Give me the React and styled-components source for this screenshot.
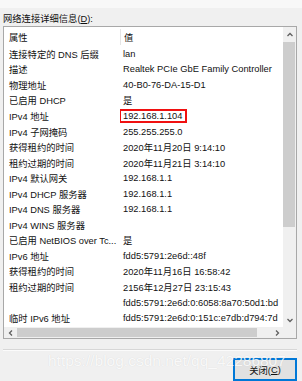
import React from 'react'
import styled, { createGlobalStyle } from 'styled-components'

const GlobalStyle = createGlobalStyle`
	html, body {
		margin: 0;
		padding: 0;
		background: #f0f0f0;
	}
	body {
		width: 302px;
		height: 381px;
		overflow: hidden;
	}
`

const rows = [
	{ name: '连接特定的 DNS 后缀', value: 'lan' },
	{ name: '描述', value: 'Realtek PCIe GbE Family Controller' },
	{ name: '物理地址', value: '40-B0-76-DA-15-D1' },
	{ name: '已启用 DHCP', value: '是' },
	{ name: 'IPv4 地址', value: '192.168.1.104', marked: true },
	{ name: 'IPv4 子网掩码', value: '255.255.255.0' },
	{ name: '获得租约的时间', value: '2020年11月20日 9:14:10' },
	{ name: '租约过期的时间', value: '2020年11月21日 3:14:10' },
	{ name: 'IPv4 默认网关', value: '192.168.1.1' },
	{ name: 'IPv4 DHCP 服务器', value: '192.168.1.1' },
	{ name: 'IPv4 DNS 服务器', value: '192.168.1.1' },
	{ name: 'IPv4 WINS 服务器', value: '' },
	{ name: '已启用 NetBIOS over Tc...', value: '是' },
	{ name: 'IPv6 地址', value: 'fdd5:5791:2e6d::48f' },
	{ name: '获得租约的时间', value: '2020年11月16日 16:58:42' },
	{ name: '租约过期的时间', value: '2156年12月27日 23:15:43' },
	{ name: '', value: 'fdd5:5791:2e6d:0:6058:8a70:50d1:bd' },
	{ name: '临时 IPv6 地址', value: 'fdd5:5791:2e6d:0:151c:e7db:d794:7d' },
]

const Chevron = ({ dir }) => {
	const paths = {
		up: 'M1.5 5 L4 2.5 L6.5 5',
		down: 'M1.5 3 L4 5.5 L6.5 3',
		left: 'M5 1.5 L2.5 4 L5 6.5',
		right: 'M3 1.5 L5.5 4 L3 6.5',
	}
	return (
		<svg width='8' height='8' viewBox='0 0 8 8'>
			<path d={paths[dir]} fill='none' stroke='#606060' strokeWidth='1.3' />
		</svg>
	)
}

export default function App() {
	return (
		<Dialog>
			<GlobalStyle />
			<Title>
				网络连接详细信息(<u>D</u>):
			</Title>
			<ListBox>
				<Content>
					<HeaderRow>
						<NameCell>属性</NameCell>
						<HeaderDivider />
						<ValueCell>值</ValueCell>
					</HeaderRow>
					{rows.map((row, i) => (
						<Row key={i}>
							<NameCell>{row.name}</NameCell>
							<ValueCell>{row.marked ? <Marked>{row.value}</Marked> : row.value}</ValueCell>
						</Row>
					))}
				</Content>
				<VScroll>
					<ArrowBox>
						<Chevron dir='up' />
					</ArrowBox>
					<VTrack>
						<VThumb />
					</VTrack>
					<ArrowBox>
						<Chevron dir='down' />
					</ArrowBox>
				</VScroll>
				<HScroll>
					<HArrowBox>
						<Chevron dir='left' />
					</HArrowBox>
					<HTrack>
						<HThumb />
					</HTrack>
					<HArrowBox>
						<Chevron dir='right' />
					</HArrowBox>
				</HScroll>
				<Corner />
			</ListBox>
			<Separator />
			<Footer>
				<Button>
					关闭(<u>C</u>)
				</Button>
			</Footer>
			<Watermark>https://blog.csdn.net/qq_42286807</Watermark>
		</Dialog>
	)
}

const Dialog = styled.div`
	position: relative;
	width: 302px;
	height: 381px;
	box-sizing: border-box;
	padding: 13px 5px 0 3px;
	background: linear-gradient(#f8f8f8 0, #f8f8f8 8px, #f0f0f0 8px);
	font-family: 'Liberation Sans', 'Noto Sans CJK SC', sans-serif;
	font-size: 9.3px;
	color: #111;
	overflow: hidden;
	display: flex;
	flex-direction: column;
`

const Title = styled.div`
	height: 13px;
	line-height: 12px;
	white-space: nowrap;
`

const ListBox = styled.div`
	width: 294px;
	height: 313px;
	box-sizing: border-box;
	border: 1px solid #a8a8a8;
	background: #fff;
	display: grid;
	grid-template-columns: 1fr 13px;
	grid-template-rows: 1fr 11px;
	overflow: hidden;
`

const Content = styled.div`
	overflow: hidden;
	display: flex;
	flex-direction: column;
`

const HeaderRow = styled.div`
	height: 19px;
	flex: none;
	display: grid;
	grid-template-columns: 116px 1px 1fr;
	align-items: center;
	padding-top: 1px;
	box-sizing: border-box;
`

const HeaderDivider = styled.div`
	height: 16px;
	background: #e5e5e5;
`

const Row = styled.div`
	height: 15.56px;
	flex: none;
	display: grid;
	grid-template-columns: 116px 1fr;
	align-items: center;
`

const NameCell = styled.div`
	padding-left: 5px;
	white-space: nowrap;
	overflow: hidden;
`

const ValueCell = styled.div`
	padding-left: 3px;
	white-space: nowrap;
	overflow: hidden;
`

const Marked = styled.span`
	display: inline-block;
	margin-left: -4px;
	padding: 0 3px 0 2px;
	line-height: 10px;
	border: 2px solid #f01010;
`

const VScroll = styled.div`
	background: #f0f0f0;
	display: flex;
	flex-direction: column;
`

const ArrowBox = styled.div`
	height: 15px;
	flex: none;
	display: flex;
	align-items: center;
	justify-content: center;
`

const VTrack = styled.div`
	flex: 1;
	display: flex;
	flex-direction: column;
`

const VThumb = styled.div`
	height: 185px;
	margin: 0 1px 0 0;
	background: #cdcdcd;
`

const HScroll = styled.div`
	background: #f0f0f0;
	display: flex;
	align-items: stretch;
`

const HArrowBox = styled.div`
	width: 13px;
	flex: none;
	display: flex;
	align-items: center;
	justify-content: center;
`

const HTrack = styled.div`
	flex: 1;
	display: flex;
	align-items: center;
`

const HThumb = styled.div`
	width: 240px;
	height: 9px;
	background: #cdcdcd;
`

const Corner = styled.div`
	background: #f0f0f0;
`

const Separator = styled.div`
	margin-top: 10px;
	width: 294px;
	height: 1px;
	background: #d7d7d7;
	border-bottom: 1px solid #fbfbfb;
`

const Footer = styled.div`
	width: 294px;
	margin-top: 7px;
	display: flex;
	justify-content: flex-end;
`

const Button = styled.div`
	width: 64px;
	height: 23px;
	box-sizing: border-box;
	border: 2px solid #0078d7;
	background: #e1e1e1;
	display: flex;
	align-items: center;
	justify-content: center;
	padding-top: 1px;
`

const Watermark = styled.div`
	position: absolute;
	left: 48px;
	top: 352px;
	font-family: 'Liberation Sans', sans-serif;
	font-size: 15.5px;
	color: rgba(255, 255, 255, 0.85);
	text-shadow: 0 0 1px rgba(0, 0, 0, 0.12);
	white-space: nowrap;
	pointer-events: none;
`
